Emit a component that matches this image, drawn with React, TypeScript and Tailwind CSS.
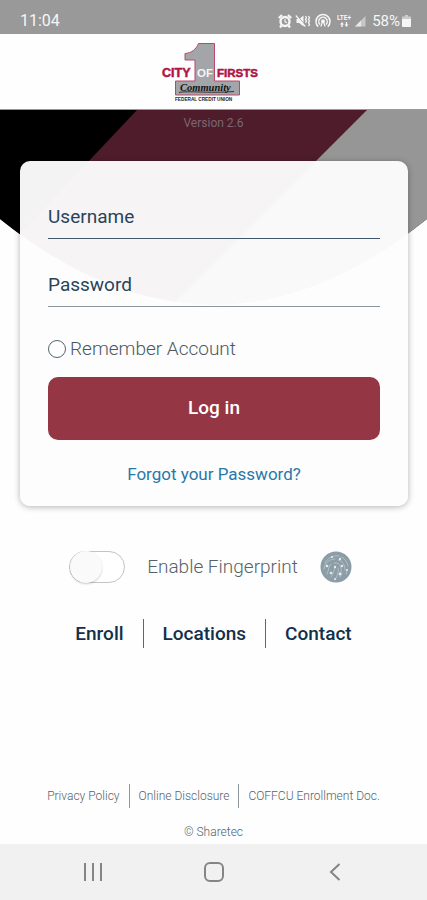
import { useState } from 'react';

const mainLinks = ['Enroll', 'Locations', 'Contact'];
const legalLinks = ['Privacy Policy', 'Online Disclosure', 'COFFCU Enrollment Doc.'];

function StatusBar() {
  return (
    <div className="flex h-[34px] items-center justify-between bg-[#999999] pt-2 pr-4 pl-5 text-[#f6f6f6]">
      <span className="text-base leading-6">11:04</span>
      <div className="flex items-center">
        {/* alarm */}
        <svg className="h-4 w-4" viewBox="0 0 16 16" fill="none" stroke="currentColor">
          <circle cx="8" cy="8.5" r="4.5" strokeWidth="2.4" />
          <path d="M8 6v2.8l2 1" strokeWidth="1.1" />
          <path d="M1.8 5 5 2M14.2 5 11 2M4.5 12.5 3 14.5M11.5 12.5l1.5 2" strokeWidth="2.2" />
        </svg>
        {/* muted, vibrating */}
        <svg className="ml-[2px] h-4 w-4" viewBox="0 0 16 16" fill="currentColor">
          <path d="M1.5 6h2.7L8.5 2.5v11L4.2 10H1.5z" />
          <path d="M1.8 2.2l9 10.6" stroke="#999" strokeWidth="1" />
          <path d="M.8 2.5l9.5 11" stroke="currentColor" strokeWidth="1.2" />
          <path d="M10.5 3l1 1.7-1 1.7 1 1.7-1 1.7M13.5 3l1 1.7-1 1.7 1 1.7-1 1.7 1 1.7-1 1.7" fill="none" stroke="currentColor" strokeWidth="1.3" />
        </svg>
        {/* hotspot */}
        <svg className="ml-1 h-4 w-4" viewBox="0 0 16 16" fill="none" stroke="currentColor" strokeWidth="1.5">
          <path d="M3.2 13.6a7 7 0 1 1 9.6 0" />
          <path d="M5 11.4a4.2 4.2 0 1 1 6 0" />
          <path d="M8 7.5 5.8 13.500M8 7.5l2.2 6" strokeWidth="1.2" />
          <circle cx="8" cy="8.2" r="1.2" fill="currentColor" />
        </svg>
        <svg className="ml-[6px] h-4 w-4" viewBox="0 0 16 16" fill="currentColor">
          <text x="0" y="7" fontSize="6.5" fontWeight="700">LTE+</text>
          <path d="M5 9l2 2.400H5.700V14H4.300v-2.400H3zM9.500 14l-2-2.400h1.300V9h1.400v2.600h1.300z" />
        </svg>
        <svg className="ml-[1px] h-3 w-3" viewBox="0 0 12 12" fill="currentColor">
          <path d="M1 11.5 11.5 1v10.5z" opacity=".5" />
          <path d="M1 11.5 7 5.5v6z" opacity=".7" />
        </svg>
        <span className="ml-[6px] text-[15px] leading-6">58%</span>
        <svg className="ml-[2px] h-3 w-[9px]" viewBox="0 0 9 12" fill="currentColor">
          <path d="M3 0h3v1.500h3V5H0V1.500h3z" opacity=".55" />
          <path d="M0 4h9v7a1 1 0 0 1-1 1H1a1 1 0 0 1-1-1z" />
        </svg>
      </div>
    </div>
  );
}

function Logo() {
  return (
    <svg className="h-[62px] w-[100px]" viewBox="0 0 100 62" role="img" aria-label="City of Firsts Community Federal Credit Union">
      <path
        d="M38.5 3.5H54.5v37.5h25V55H15.5V41H35V20H25v-6.5C31.500 13 36 9.500 38.500 3.500z"
        fill="#a3a5a8"
        stroke="#b9486c"
        strokeWidth="1"
      />
      <g fontFamily="'Liberation Sans', Arial, sans-serif" fontWeight="700" fontSize="12.5">
        <text x="2" y="36.500" fill="#b01446" stroke="#b01446" strokeWidth=".5">CITY</text>
        <text x="37" y="36.500" fontSize="11.500" fill="#f4f4f4">OF</text>
        <text x="57" y="36.500" fontSize="11.500" fill="#b01446" stroke="#b01446" strokeWidth=".5">FIRSTS</text>
      </g>
      <path d="M19 52.500c8-2 30 1 55-1" stroke="#222" strokeWidth=".9" fill="none" />
      <text x="20" y="51" fontFamily="'Liberation Serif', serif" fontStyle="italic" fontWeight="700" fontSize="10.500" fill="#111">
        Community
      </text>
      <text x="15" y="60.500" fontFamily="'Liberation Sans', Arial, sans-serif" fontWeight="700" fontSize="4.700" fill="#222">
        FEDERAL CREDIT UNION
      </text>
    </svg>
  );
}

function HeroBackground() {
  return (
    <svg className="absolute inset-x-0 top-0 h-[196px] w-full" viewBox="0 0 427 196" preserveAspectRatio="none" aria-hidden="true">
      <defs>
        <clipPath id="hero">
          <path d="M0 0h427v109Q213 280 0 109z" />
        </clipPath>
      </defs>
      <g clipPath="url(#hero)">
        <path d="M0 0h427v196H0z" fill="#4f1c2b" />
        <path d="M0 0h137L19 125 0 140z" fill="#000" />
        <path d="M367 0h60v196H171z" fill="#969696" />
      </g>
    </svg>
  );
}

function FingerprintIcon() {
  return (
    <svg className="h-8 w-8" viewBox="0 0 32 32" aria-hidden="true">
      <circle cx="16" cy="16" r="15.5" fill="#8b9da6" />
      <g fill="none" stroke="#b4c0c6" strokeWidth="1" strokeLinecap="round">
        <path d="M5 12c3-6 9-8 14-7M22 6c3 2 5 5 6 9M4 18c1-7 6-10 11-10M18 9c5 1 7 5 7 10" />
        <path d="M7 23c2-4 1-7 4-10M14 12c5-1 8 3 7 9M11 26c3-4 3-7 4-10M18 17c1 4-1 8-3 12M20 26l2-4M26 23l1-3" />
      </g>
      <g fill="#e6ebed">
        <circle cx="12" cy="6" r="1.1" />
        <circle cx="20" cy="8" r="1.2" />
        <circle cx="7" cy="15" r="1.3" />
        <circle cx="15" cy="16" r="1.2" />
        <circle cx="22" cy="15" r="1.2" />
        <circle cx="11" cy="22" r="1.3" />
        <circle cx="20" cy="23" r="1.4" />
        <circle cx="27" cy="19" r="1.1" />
        <circle cx="15" cy="28" r="1" />
      </g>
    </svg>
  );
}

function LoginCard() {
  const inputClass =
    'block h-[42px] w-full border-b bg-transparent pb-[2px] text-[19px] text-[#17344a] outline-none placeholder:text-[#29445a] placeholder:opacity-100';

  return (
    <form
      className="mr-[19px] ml-5 rounded-[10px] bg-[#fdfdfd]/96 px-7 pt-9 pb-5 shadow-[0_1px_6px_rgba(0,0,0,0.3)]"
      onSubmit={(e) => e.preventDefault()}
    >
      <input className={`${inputClass} border-[#3f566b]`} type="text" placeholder="Username" aria-label="Username" />
      <input className={`${inputClass} mt-[26px] border-[#8b979e]`} type="password" placeholder="Password" aria-label="Password" />
      <label className="mt-[30px] flex h-6 items-center gap-1 text-[19px] font-light text-[#4a5860]">
        <input
          type="checkbox"
          className="h-[18px] w-[18px] appearance-none rounded-full border border-[#56646c] bg-white checked:bg-[#943644]"
        />
        Remember Account
      </label>
      <button type="submit" className="mt-4 h-[63px] w-full rounded-[10px] bg-[#943644] text-[19px] font-medium text-white">
        Log in
      </button>
      <a href="#forgot" className="mt-[22px] block text-center text-[17px] leading-6 text-[#2878a8]">
        Forgot your Password?
      </a>
    </form>
  );
}

export default function App() {
  const [fingerprint, setFingerprint] = useState(false);

  return (
    <div className="flex min-h-screen flex-col bg-[#fefefe] font-[Roboto,sans-serif]">
      <StatusBar />
      <header className="flex h-[76px] justify-center border-b border-[#999999] pr-2 pt-[6px]">
        <Logo />
      </header>

      <main className="relative">
        <HeroBackground />
        <div className="relative">
          <p className="h-[51px] pt-[5px] text-center text-xs text-[#7b6870]">Version 2.6</p>
          <LoginCard />

          <div className="mt-[45px] flex h-8 items-center justify-center gap-[22px] pr-[6px]">
            <label htmlFor="fingerprint" className="order-2 text-[19px] font-light text-[#56636a]">
              Enable Fingerprint
            </label>
            <button
              id="fingerprint"
              type="button"
              role="switch"
              aria-checked={fingerprint}
              onClick={() => setFingerprint(!fingerprint)}
              className={`order-1 flex h-8 w-14 items-center rounded-full border border-[#c4c4c4] bg-white ${fingerprint ? 'justify-end' : 'justify-start'}`}
            >
              <span className="h-8 w-8 rounded-full bg-[#fafafa] shadow-[0_1px_2px_rgba(0,0,0,0.2)]" />
            </button>
            <span className="order-3">
              <FingerprintIcon />
            </span>
          </div>

          <nav className="mt-9 flex h-[29px] items-center justify-center divide-x divide-[#5b6970]">
            {mainLinks.map((link) => (
              <a key={link} href="#" className="px-[19px] text-[19px] leading-[29px] font-medium text-[#12304a]">
                {link}
              </a>
            ))}
          </nav>
        </div>
      </main>

      <footer className="mt-auto text-xs font-light text-[#56636a]">
        <nav className="flex items-center justify-center divide-x divide-[#8d999f]">
          {legalLinks.map((link) => (
            <a key={link} href="#" className="px-[9px] leading-6">
              {link}
            </a>
          ))}
        </nav>
        <p className="mt-[14px] pb-[2px] text-center leading-5">© Sharetec</p>
      </footer>

      <div className="flex h-14 items-center bg-[#f1f1f1] px-8 text-[#858585]">
        <button type="button" aria-label="Recent apps" className="flex flex-1 justify-center">
          <svg className="h-6 w-6" viewBox="0 0 24 24" fill="none" stroke="currentColor" strokeWidth="2">
            <path d="M4 3v18M12 3v18M20 3v18" />
          </svg>
        </button>
        <button type="button" aria-label="Home" className="flex flex-1 justify-center">
          <svg className="h-6 w-6" viewBox="0 0 24 24" fill="none" stroke="currentColor" strokeWidth="2">
            <rect x="3" y="3" width="18" height="18" rx="5" />
          </svg>
        </button>
        <button type="button" aria-label="Back" className="flex flex-1 justify-center">
          <svg className="h-6 w-6" viewBox="0 0 24 24" fill="none" stroke="currentColor" strokeWidth="2">
            <path d="M16.5 4 8 12l8.5 8" />
          </svg>
        </button>
      </div>
    </div>
  );
}
